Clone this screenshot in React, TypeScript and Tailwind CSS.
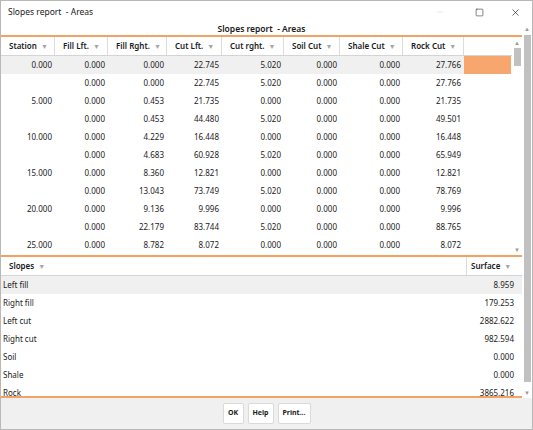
import { Minus, Square, X } from 'lucide-react';

const columns = [
  { label: 'Station', w: 'w-[54px]' },
  { label: 'Fill Lft.', w: 'w-[53px]' },
  { label: 'Fill Rght.', w: 'w-[59px]' },
  { label: 'Cut Lft.', w: 'w-[55px]' },
  { label: 'Cut rght.', w: 'w-[62px]' },
  { label: 'Soil Cut', w: 'w-[56px]' },
  { label: 'Shale Cut', w: 'w-[63px]' },
  { label: 'Rock Cut', w: 'w-[61px]' },
];

const rows = [
  ['0.000', '0.000', '0.000', '22.745', '5.020', '0.000', '0.000', '27.766'],
  ['', '0.000', '0.000', '22.745', '5.020', '0.000', '0.000', '27.766'],
  ['5.000', '0.000', '0.453', '21.735', '0.000', '0.000', '0.000', '21.735'],
  ['', '0.000', '0.453', '44.480', '5.020', '0.000', '0.000', '49.501'],
  ['10.000', '0.000', '4.229', '16.448', '0.000', '0.000', '0.000', '16.448'],
  ['', '0.000', '4.683', '60.928', '5.020', '0.000', '0.000', '65.949'],
  ['15.000', '0.000', '8.360', '12.821', '0.000', '0.000', '0.000', '12.821'],
  ['', '0.000', '13.043', '73.749', '5.020', '0.000', '0.000', '78.769'],
  ['20.000', '0.000', '9.136', '9.996', '0.000', '0.000', '0.000', '9.996'],
  ['', '0.000', '22.179', '83.744', '5.020', '0.000', '0.000', '88.765'],
  ['25.000', '0.000', '8.782', '8.072', '0.000', '0.000', '0.000', '8.072'],
];

const slopes = [
  ['Left fill', '8.959'],
  ['Right fill', '179.253'],
  ['Left cut', '2882.622'],
  ['Right cut', '982.594'],
  ['Soil', '0.000'],
  ['Shale', '0.000'],
  ['Rock', '3865.216'],
];

function Caret() {
  return <span className="ml-[4px] text-[7px] text-[#a6a6a6] leading-none">▼</span>;
}

function ArrowUp() {
  return <span className="text-[6px] leading-none text-[#9a9a9a]">▲</span>;
}

function ArrowDown() {
  return <span className="text-[6px] leading-none text-[#9a9a9a]">▼</span>;
}

export default function App() {
  return (
    <div
      className="w-[533px] h-[430px] bg-white border border-[#b8b8b8] flex flex-col overflow-hidden text-[#1a1a1a]"
      style={{ fontFamily: '"Noto Sans", "Open Sans", sans-serif' }}
    >
      {/* Title bar */}
      <div className="h-[22px] flex items-center shrink-0">
        <span className="pl-[7px] text-[8.5px] whitespace-pre flex-1">Slopes report  - Areas</span>
        <div className="flex items-center h-full">
          <div className="w-[40px] flex justify-center"><Minus className="w-[10px] h-[10px] text-[#c8c8c8]" strokeWidth={1} /></div>
          <div className="w-[38px] flex justify-center"><Square className="w-[9px] h-[9px]" strokeWidth={1.4} /></div>
          <div className="w-[34px] flex justify-center"><X className="w-[11px] h-[11px]" strokeWidth={1.4} /></div>
        </div>
      </div>

      {/* Body */}
      <div className="flex-1 flex min-h-0">
        <div className="flex-1 flex flex-col min-w-0">
          <div className="h-[14px] flex items-center justify-center text-[8.5px] font-semibold whitespace-pre border-b-2 border-[#f2a263] shrink-0">
            Slopes report  - Areas
          </div>

          {/* Upper table */}
          <div className="h-[218px] flex shrink-0">
            <div className="flex-1 flex flex-col text-[8px]">
              <div className="h-[19px] flex border-b border-[#d4d4d4] font-semibold shrink-0">
                {columns.map((c) => (
                  <div key={c.label} className={`${c.w} flex items-center pl-[8px] border-r border-[#dcdcdc] whitespace-nowrap`}>
                    {c.label}
                    <Caret />
                  </div>
                ))}
              </div>
              {rows.map((r, i) => (
                <div key={i} className="h-[18px] flex shrink-0">
                  <div className={`flex ${i === 0 ? 'bg-[#f0f0f0]' : ''}`}>
                    {r.map((v, j) => (
                      <div key={j} className={`${columns[j].w} flex items-center justify-end pr-[3px]`}>
                        {v}
                      </div>
                    ))}
                  </div>
                  {i === 0 && <div className="w-[47px] bg-[#f7a66e]" />}
                </div>
              ))}
            </div>
            <div className="w-[10px] flex flex-col items-center pt-[3px] pb-[2px]">
              <ArrowUp />
              <div className="w-[7px] h-[18px] bg-[#c1c1c1] mt-[2px]" />
              <div className="flex-1" />
              <ArrowDown />
            </div>
          </div>

          {/* Lower table */}
          <div className="flex-1 flex flex-col border-t-2 border-[#f2a263] border-b-2 text-[8px] min-h-0 overflow-hidden">
            <div className="h-[19px] flex border-b border-[#d4d4d4] font-semibold shrink-0">
              <div className="flex-1 flex items-center pl-[8px]">
                Slopes
                <Caret />
              </div>
              <div className="w-[45px] flex items-center pl-[4px] border-l border-[#dcdcdc] mr-[11px]">
                Surface
                <Caret />
              </div>
            </div>
            {slopes.map(([name, v], i) => (
              <div key={name} className={`h-[18px] flex items-center shrink-0 pl-[2px] pr-[8px] ${i === 0 ? 'bg-[#f0f0f0]' : ''}`}>
                <span className="flex-1">{name}</span>
                <span>{v}</span>
              </div>
            ))}
          </div>
        </div>

        {/* Outer scrollbar */}
        <div className="w-[10px] flex flex-col items-center pt-[3px] pb-[2px] shrink-0">
          <ArrowUp />
          <div className="w-[7px] flex-1 bg-[#c1c1c1] mt-[3px] mb-[8px]" />
          <ArrowDown />
        </div>
      </div>

      {/* Footer */}
      <div className="h-[31px] bg-[#f0f0f0] flex items-center justify-center gap-[4px] shrink-0 text-[7px] font-bold">
        <button className="h-[21px] w-[21px] bg-white border border-[#dadada] rounded-[2px]">OK</button>
        <button className="h-[21px] w-[26px] bg-white border border-[#dadada] rounded-[2px]">Help</button>
        <button className="h-[21px] w-[33px] bg-white border border-[#dadada] rounded-[2px]">Print...</button>
      </div>
    </div>
  );
}
